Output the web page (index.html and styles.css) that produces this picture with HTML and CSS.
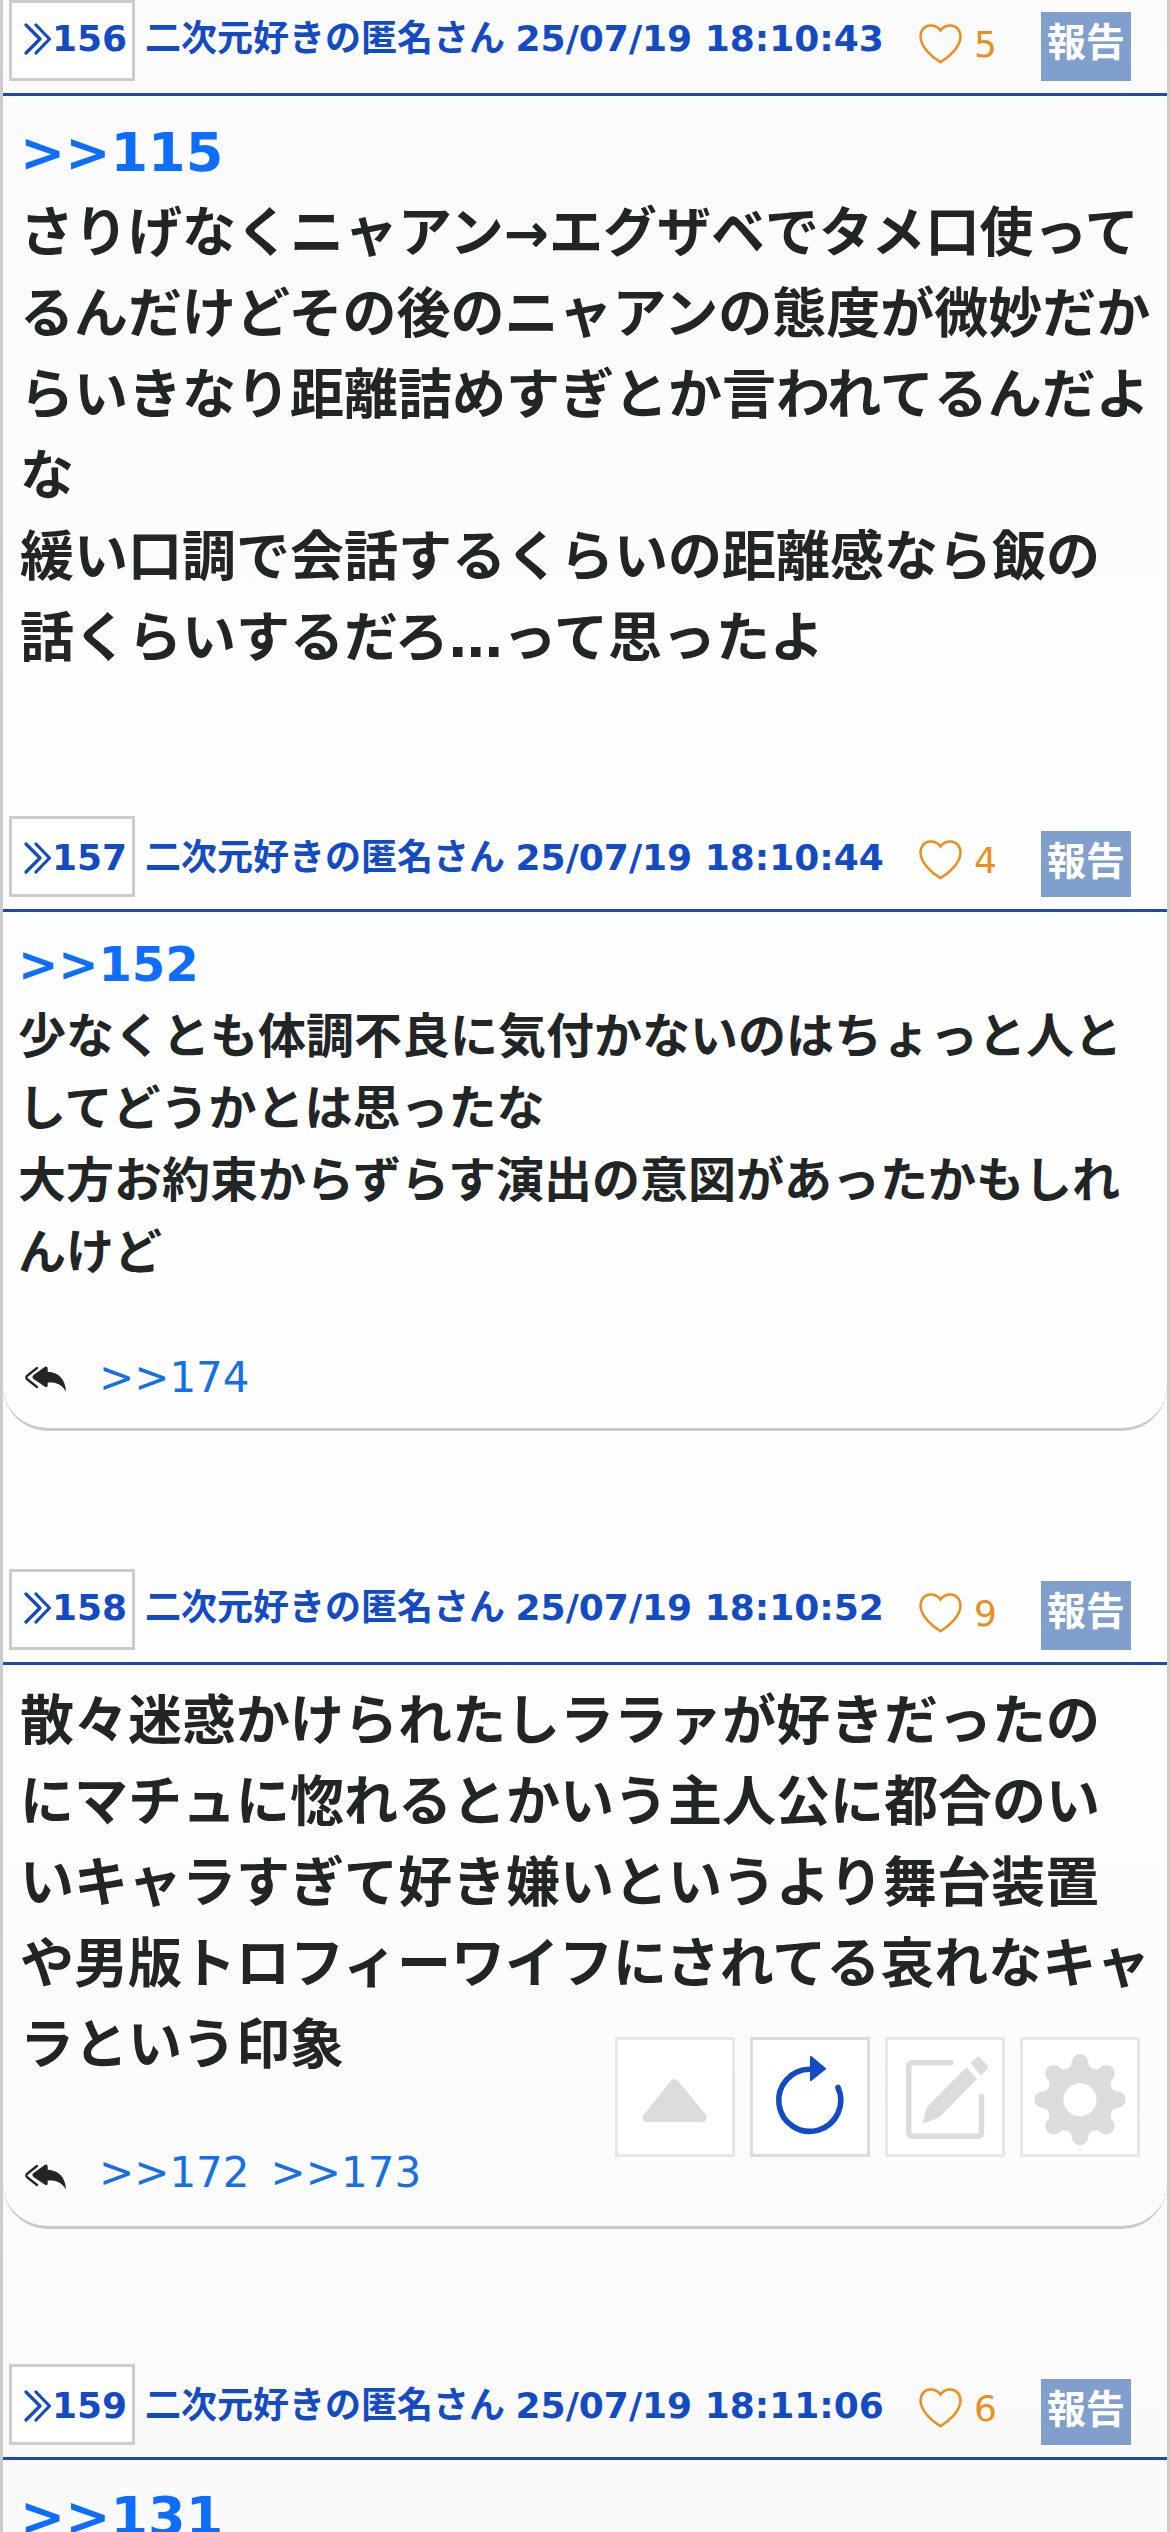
FILE: index.html
```html
<!DOCTYPE html>
<html lang="ja">
<head>
<meta charset="utf-8">
<title>スレッド</title>
<link rel="stylesheet" href="styles.css">
</head>
<body>
<svg class="defs" width="0" height="0" aria-hidden="true">
  <symbol id="chevrons" viewBox="0 0 27 32"><path d="M2 2 16 16 2 30M12 2 25.500 16 12 30" fill="none" stroke="currentColor" stroke-width="3.200" stroke-linecap="round" stroke-linejoin="round"/></symbol>
  <symbol id="heart" viewBox="0 0 43 40"><path d="M21.500 6.500C24.500 2 29 1.200 32.500 1.500 38 2 41.500 7 41.500 12.500 41.500 23 30 33 21.500 38.200 13 33 1.500 23 1.500 12.500 1.500 7 5 2 10.500 1.500 14 1.200 18.500 2 21.500 6.500Z" fill="none" stroke="currentColor" stroke-width="2.500"/></symbol>
  <symbol id="reply" viewBox="0 0 42 26"><path d="M13 2 3.500 9.500Q1 11.500 3.500 13.500L13 21" fill="none" stroke="currentColor" stroke-width="2.300" stroke-linecap="round"/><path d="M21 .8Q23.500-.5 23.700 2.500V5.700C34 6 41.500 13 42 25.500 37 17.500 32 16.300 23.700 16.500V19.500Q23.500 22 21 20.700L9.500 13Q7.300 11 9.500 9Z" fill="currentColor"/></symbol>
</svg>
<main class="thread">
  <article class="post">
    <header class="post-head">
      <a class="num"><svg class="chevrons"><use href="#chevrons"/></svg>156</a>
      <span class="author">二次元好きの匿名さん <time>25/07/19 18:10:43</time></span>
      <span class="like"><svg class="heart"><use href="#heart"/></svg>5</span>
      <a class="report">報告</a>
    </header>
    <div class="card plain">
      <p class="text large"><a class="anchor">&gt;&gt;115</a><br>さりげなくニャアン→エグザベでタメ口使って<br>るんだけどその後のニャアンの態度が微妙だか<br>らいきなり距離詰めすぎとか言われてるんだよ<br>な<br>緩い口調で会話するくらいの距離感なら飯の<br>話くらいするだろ…って思ったよ</p>
    </div>
  </article>
  <article class="post shifted">
    <header class="post-head">
      <a class="num"><svg class="chevrons"><use href="#chevrons"/></svg>157</a>
      <span class="author">二次元好きの匿名さん <time>25/07/19 18:10:44</time></span>
      <span class="like"><svg class="heart"><use href="#heart"/></svg>4</span>
      <a class="report">報告</a>
    </header>
    <div class="card medium-card">
      <p class="text medium"><a class="anchor">&gt;&gt;152</a><br>少なくとも体調不良に気付かないのはちょっと人と<br>してどうかとは思ったな<br>大方お約束からずらす演出の意図があったかもしれ<br>んけど</p>
      <div class="replies"><svg class="reply-icon"><use href="#reply"/></svg><a>&gt;&gt;174</a></div>
    </div>
  </article>
  <article class="post">
    <header class="post-head">
      <a class="num"><svg class="chevrons"><use href="#chevrons"/></svg>158</a>
      <span class="author">二次元好きの匿名さん <time>25/07/19 18:10:52</time></span>
      <span class="like"><svg class="heart"><use href="#heart"/></svg>9</span>
      <a class="report">報告</a>
    </header>
    <div class="card large-card">
      <p class="text large">散々迷惑かけられたしララァが好きだったの<br>にマチュに惚れるとかいう主人公に都合のい<br>いキャラすぎて好き嫌いというより舞台装置<br>や男版トロフィーワイフにされてる哀れなキャ<br>ラという印象</p>
      <div class="replies"><svg class="reply-icon"><use href="#reply"/></svg><a>&gt;&gt;172</a><a>&gt;&gt;173</a></div>
    </div>
  </article>
  <article class="post shifted last">
    <header class="post-head">
      <a class="num"><svg class="chevrons"><use href="#chevrons"/></svg>159</a>
      <span class="author">二次元好きの匿名さん <time>25/07/19 18:11:06</time></span>
      <span class="like"><svg class="heart"><use href="#heart"/></svg>6</span>
      <a class="report">報告</a>
    </header>
    <div class="card plain">
      <p class="text large"><a class="anchor">&gt;&gt;131</a></p>
    </div>
  </article>
</main>
<nav class="tools">
  <a class="tool"><svg viewBox="0 0 120 120"><path d="M59.500 47 32.500 80.500H87Z" fill="currentColor" stroke="currentColor" stroke-width="9.500" stroke-linejoin="round"/></svg></a>
  <a class="tool active"><svg viewBox="0 0 120 120"><path d="M60 32.300A31 31 0 1 0 88 50.500" fill="none" stroke="currentColor" stroke-width="5.600" stroke-linecap="round"/><path d="M61 20 75 31.700 61 43Z" fill="currentColor" stroke="currentColor" stroke-width="2" stroke-linejoin="round"/></svg></a>
  <a class="tool"><svg viewBox="0 0 120 120"><path d="M66 25.700H28Q23.700 25.700 23.700 30V95Q23.700 99.300 28 99.300H92Q96.500 99.300 96.500 95V59.500" fill="none" stroke="currentColor" stroke-width="5.500" stroke-linecap="round"/><path d="M81.400 31.300 91 42 53.800 79.800 38.500 85.600 42.500 70.500Z" fill="currentColor" stroke="currentColor" stroke-width="1.500" stroke-linejoin="round"/><path d="M88 25.800 93.500 21.700 101 30 96 36Z" fill="currentColor" stroke="currentColor" stroke-width="4" stroke-linejoin="round"/></svg></a>
  <a class="tool"><svg viewBox="0 0 120 120">
    <defs><path id="tooth" d="M0 0-12.800-31C-9.600-32.300-8.500-34-8.200-37.200A8.200 8.200 0 0 1 8.200-37.200C8.500-34 9.600-32.300 12.800-31Z"/></defs>
    <g transform="translate(60 62.700)" fill="currentColor" stroke="currentColor" stroke-width=".4"><use href="#tooth"/><use href="#tooth" transform="rotate(45)"/><use href="#tooth" transform="rotate(90)"/><use href="#tooth" transform="rotate(135)"/><use href="#tooth" transform="rotate(180)"/><use href="#tooth" transform="rotate(225)"/><use href="#tooth" transform="rotate(270)"/><use href="#tooth" transform="rotate(315)"/></g>
    <circle cx="60" cy="62.700" r="16.500" fill="#fff"/></svg></a>
</nav>
</body>
</html>
```
FILE: styles.css
```css
* { box-sizing: border-box; }
html, body { margin: 0; height: 2532px; overflow: hidden; }
body {
  font-family: "DejaVu Sans", "Noto Sans CJK JP", sans-serif;
  color: #222526;
}
.defs { display: block; position: absolute; }
.thread {
  height: 2532px;
  overflow: hidden;
  border-left: 3px solid #ccc;
  border-right: 3px solid #ccc;
  background: linear-gradient(#fbfbfb 0, #fcfcfc 500px, #fefefe 720px, #fefefe 1600px, #fcfcfc 2000px, #fafafa 2450px);
}
.post { display: flex; flex-direction: column; }
.post-head {
  display: flex;
  align-items: flex-start;
  height: 96px;
  padding-left: 6px;
  border-bottom: 3px solid #1f4ba5;
  font-size: 36px;
  line-height: 54px;
  white-space: nowrap;
}
.num, .author { color: #134bc4; font-weight: bold; }
.num {
  display: flex;
  width: 126px;
  height: 81px;
  padding: 9px 0 0 12px;
  border: 3px solid #ccc;
  background: #fff;
}
.chevrons { width: 27px; height: 32px; margin: 11px 1px 0 0; flex: none; }
.author { width: 784px; padding: 12px 0 0 10px; }
.author time { margin-left: -2px; }
.like { display: flex; width: 122px; padding-top: 18px; color: #ec8e1c; }
.heart { width: 43px; height: 40px; margin: 6px 12px 0 0; flex: none; }
.report {
  width: 90px;
  height: 69px;
  margin-top: 12px;
  background: #809fcd;
  color: #fff;
  font-size: 39px;
  font-weight: bold;
  line-height: 62px;
  text-align: center;
}
.shifted .num { padding-top: 12px; }
.shifted .author { padding-top: 15px; }
.shifted .report { height: 66px; margin-top: 15px; }
.card { padding: 16px 15px 0; }
.plain { height: 720px; }
.last .plain { height: 72px; }
.medium-card, .large-card {
  border-bottom: 3px solid #c9c9c9;
  border-radius: 0 0 45px 45px;
}
.medium-card { height: 519px; margin-bottom: 138px; }
.large-card { height: 564px; margin-bottom: 135px; }
.text { margin: 0; font-weight: bold; white-space: nowrap; }
.large { padding-left: 2px; font-size: 54px; line-height: 81px; }
.medium { font-size: 48px; line-height: 72px; }
.anchor { color: #0d6efd; }
.replies {
  display: flex;
  margin-top: 58px;
  padding-left: 6px;
  font-size: 42px;
  line-height: 63px;
}
.large-card .replies { margin-top: 55px; }
.reply-icon { width: 42px; height: 26px; margin: 20px 33px 0 0; flex: none; }
.large-card .reply-icon { margin-top: 23px; }
.replies a + a { margin-left: 21px; }
.replies a { color: #176fe8; }
.tools {
  position: fixed;
  left: 615px;
  top: 2037px;
  display: flex;
  gap: 15px;
}
.tool {
  width: 120px;
  height: 120px;
  border: 3px solid #e7e7e7;
  background: #fff;
  color: #dcdcdc;
}
.tool svg { display: block; width: 120px; height: 120px; margin: -3px; }
.active { border-color: #dcdcdc; color: #124bc4; }
```
